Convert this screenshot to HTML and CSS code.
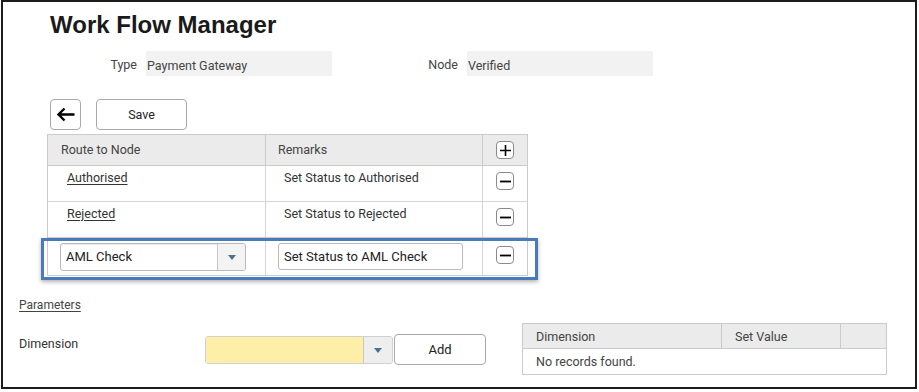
FILE: index.html
```html
<!DOCTYPE html>
<html lang="en">
<head>
  <meta charset="UTF-8">
  <meta name="viewport" content="width=device-width, initial-scale=1.0">
  <title>Work Flow Manager</title>
  <link rel="stylesheet" href="styles.css">
</head>
<body>
  <div class="frame">
    <h1 class="title">Work Flow Manager</h1>

    <div class="info-row">
      <div class="info-label">Type</div>
      <div class="info-value">Payment Gateway</div>
      <div class="info-label node">Node</div>
      <div class="info-value">Verified</div>
    </div>

    <div class="toolbar">
      <button class="btn back" aria-label="Back">
        <svg width="19" height="15" viewBox="0 0 19 15">
          <path d="M18.5 7.5H3M8.5 1.5L2.5 7.5l6 6" fill="none" stroke="#000" stroke-width="2.4"/>
        </svg>
      </button>
      <button class="btn save">Save</button>
    </div>

    <div class="route-wrap">
      <div class="route-table">
        <div class="row head">
          <div class="cell">Route to Node</div>
          <div class="cell">Remarks</div>
          <div class="cell action">
            <span class="icon-btn">
              <svg width="11" height="11" viewBox="0 0 11 11"><path d="M5.5 0v11M0 5.5h11" stroke="#000" stroke-width="1.6"/></svg>
            </span>
          </div>
        </div>
        <div class="row">
          <div class="cell"><a class="link">Authorised</a></div>
          <div class="cell remark">Set Status to Authorised</div>
          <div class="cell action">
            <span class="icon-btn"><svg width="11" height="11" viewBox="0 0 11 11"><path d="M0 5.5h11" stroke="#000" stroke-width="1.8"/></svg></span>
          </div>
        </div>
        <div class="row">
          <div class="cell"><a class="link">Rejected</a></div>
          <div class="cell remark">Set Status to Rejected</div>
          <div class="cell action">
            <span class="icon-btn"><svg width="11" height="11" viewBox="0 0 11 11"><path d="M0 5.5h11" stroke="#000" stroke-width="1.8"/></svg></span>
          </div>
        </div>
        <div class="row edit">
          <div class="cell">
            <div class="select">
              <span class="select-text">AML Check</span>
              <span class="select-arrow"><svg width="8" height="5" viewBox="0 0 8 5"><path d="M0 0h8L4 5z" fill="#4d6f8a"/></svg></span>
            </div>
          </div>
          <div class="cell">
            <div class="text-input">Set Status to AML Check</div>
          </div>
          <div class="cell action">
            <span class="icon-btn"><svg width="11" height="11" viewBox="0 0 11 11"><path d="M0 5.5h11" stroke="#000" stroke-width="1.8"/></svg></span>
          </div>
        </div>
      </div>
      <div class="highlight"></div>
    </div>

    <a class="params-link">Parameters</a>

    <div class="param-row">
      <div class="param-label">Dimension</div>
      <div class="select yellow">
        <span class="select-text"></span>
        <span class="select-arrow"><svg width="8" height="5" viewBox="0 0 8 5"><path d="M0 0h8L4 5z" fill="#4d6f8a"/></svg></span>
      </div>
      <button class="btn add">Add</button>

      <div class="dim-table">
        <div class="dim-row head">
          <div class="dim-cell">Dimension</div>
          <div class="dim-cell">Set Value</div>
          <div class="dim-cell"></div>
        </div>
        <div class="dim-row">
          <div class="dim-cell empty">No records found.</div>
        </div>
      </div>
    </div>
  </div>
</body>
</html>
```

FILE: styles.css
```css
* {
  box-sizing: border-box;
  margin: 0;
  padding: 0;
  font-family: "Roboto", "Noto Sans", sans-serif;
}

body {
  background: #fff;
  color: #333;
}

.frame {
  width: 916px;
  height: 389px;
  margin-left: 1px;
  border: 2px solid #1c1c1c;
  padding-top: 9px;
  display: flex;
  flex-direction: column;
  font-size: 12.5px;

  & > .title {
    padding-left: 47px;
    font-family: "Liberation Sans", Arial, sans-serif;
    font-size: 24px;
    font-weight: 700;
    line-height: 28px;
    color: #1a1a1a;
  }
}

.info-row {
  display: flex;
  align-items: center;
  height: 25px;
  margin-top: 12px;
  padding-left: 97px;

  & > .info-label {
    width: 37px;
    padding-top: 2px;
    text-align: right;
    color: #444;
  }

  & > .info-label.node {
    margin-left: 89px;
  }

  & > .info-value {
    width: 186px;
    height: 25px;
    margin-left: 9px;
    padding: 2px 0 0 1px;
    line-height: 25px;
    background-color: #f2f2f2;
    color: #444;
  }
}

.btn {
  background: #fff;
  border: 1px solid #a9a9a9;
  border-radius: 4px;
  color: #222;
  font-size: 12.5px;
  display: flex;
  align-items: center;
  justify-content: center;
}

.toolbar {
  display: flex;
  gap: 15px;
  margin-top: 23px;
  padding-left: 47px;

  & > .back {
    width: 31px;
    height: 31px;
  }

  & > .save {
    width: 91px;
    height: 31px;
  }
}

.route-wrap {
  position: relative;
  margin-top: 4px;
  margin-left: 44px;
  width: 481px;

  & > .highlight {
    position: absolute;
    left: -6px;
    top: 104px;
    width: 497px;
    height: 42px;
    border: 3px solid #4a7bb9;
    box-shadow: 0 2px 4px rgba(0, 0, 0, 0.3);
    pointer-events: none;
  }
}

.route-table {
  border: 1px solid #cbcbcb;

  & > .row {
    display: grid;
    grid-template-columns: 218px 217px 44px;
    height: 36px;
    border-bottom: 1px solid #d4d4d4;

    & > .cell {
      border-right: 1px solid #d4d4d4;
      padding: 4px 0 0 19px;
      line-height: 16px;
      color: #333;

      &.remark {
        padding-left: 18px;
      }

      &.action {
        border-right: none;
        padding: 6px 0 0 0;
        display: flex;
        justify-content: center;
      }
    }

    &.head {
      height: 31px;
      background-color: #ebebeb;
      border-bottom: 1px solid #cbcbcb;

      & > .cell {
        display: flex;
        align-items: center;
        padding: 0 0 0 13px;
        border-right-color: #cbcbcb;
        color: #444;

        &:nth-child(2) {
          padding-left: 12px;
        }

        &.action {
          padding: 0;
          justify-content: center;
        }
      }
    }

    &.edit {
      height: 37px;
      border-bottom: none;

      & > .cell {
        padding: 5px 0 0 12px;

        &.action {
          padding: 8px 0 0 0;
        }
      }
    }
  }
}

.link {
  color: #333;
  text-decoration: underline;
  text-underline-offset: 2px;
}

.icon-btn {
  width: 18px;
  height: 18px;
  border: 1px solid #8a8a8a;
  border-radius: 4px;
  display: flex;
  align-items: center;
  justify-content: center;
  background: #fff;
}

.select {
  display: flex;
  width: 186px;
  height: 28px;
  border: 1px solid #b9b9b9;
  border-radius: 3px;
  background: #fff;
  box-shadow: inset 0 1px 1px rgba(0, 0, 0, 0.08);

  & > .select-text {
    flex: 1;
    padding-left: 5px;
    line-height: 26px;
    font-size: 13px;
    color: #222;
  }

  & > .select-arrow {
    width: 28px;
    border-left: 1px solid #c8c8c8;
    background-color: #f3f3f3;
    display: flex;
    align-items: center;
    justify-content: center;
    border-radius: 0 2px 2px 0;
  }

  &.yellow {
    width: 188px;
    height: 28px;
    margin-top: 13px;
    border-color: #d0d0d0;

    & > .select-text {
      background-color: #feefa8;
      border-radius: 2px 0 0 2px;
    }

    & > .select-arrow {
      width: 29px;
      background-color: #eeeeee;
    }
  }
}

.text-input {
  width: 185px;
  height: 27px;
  border: 1px solid #b9b9b9;
  border-radius: 3px;
  padding-left: 5px;
  line-height: 25px;
  font-size: 13px;
  color: #222;
}

.params-link {
  margin-top: 22px;
  margin-left: 16px;
  width: max-content;
  font-size: 12px;
  line-height: 14px;
  color: #444;
  text-decoration: underline;
  text-underline-offset: 2px;
}

.param-row {
  display: flex;
  align-items: flex-start;
  margin-top: 11px;
  padding-left: 16px;

  & > .param-label {
    width: 186px;
    margin-top: 13px;
    line-height: 16px;
    color: #333;
  }

  & > .add {
    width: 92px;
    height: 31px;
    margin-top: 11px;
    margin-left: 1px;
    font-size: 13px;
  }
}

.dim-table {
  width: 365px;
  margin-left: 36px;
  border: 1px solid #cbcbcb;

  & > .dim-row {
    display: grid;
    grid-template-columns: 199px 119px 1fr;
    height: 25px;

    &.head {
      background-color: #ebebeb;
      border-bottom: 1px solid #cbcbcb;
    }

    & > .dim-cell {
      display: flex;
      align-items: center;
      padding-left: 13px;
      color: #444;
      border-right: 1px solid #cbcbcb;

      &:last-child {
        border-right: none;
      }

      &.empty {
        grid-column: 1 / -1;
      }
    }
  }
}
```
